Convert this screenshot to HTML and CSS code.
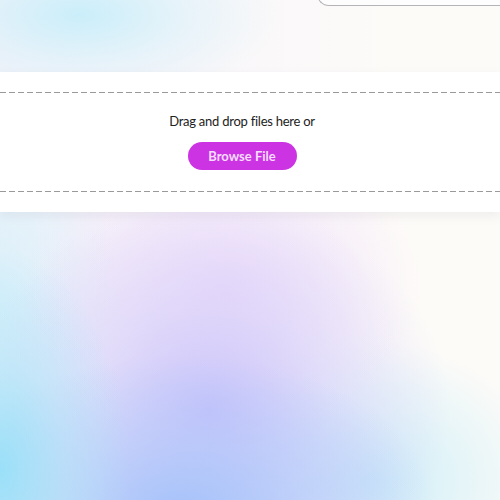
FILE: index.html
```html
<!DOCTYPE html>
<html lang="en">
<head>
<meta charset="utf-8">
<title>Upload</title>
<link rel="stylesheet" href="styles.css">
</head>
<body>
<header class="header">
  <div class="search"></div>
</header>
<section class="card">
  <div class="dropzone">
    <p class="hint">Drag and drop files here or</p>
    <button class="browse">Browse File</button>
  </div>
</section>
</body>
</html>
```
FILE: styles.css
```css
html, body {
  margin: 0;
  height: 100%;
}
body {
  font-family: "Lato", "Inter", sans-serif;
  background-color: #fdfbf8;
  background-image:
    radial-gradient(ellipse 130px 220px at 0px 470px, rgba(150, 224, 248, 0.95), rgba(170, 228, 248, 0.5) 50%, rgba(170, 228, 248, 0)),
    radial-gradient(ellipse 260px 160px at 180px 515px, rgba(160, 192, 250, 0.95), rgba(170, 196, 250, 0.5) 50%, rgba(170, 196, 250, 0)),
    radial-gradient(ellipse 240px 210px at 210px 410px, rgba(198, 192, 250, 0.95), rgba(208, 202, 250, 0.5) 50%, rgba(208, 202, 250, 0)),
    radial-gradient(ellipse 200px 150px at 225px 285px, rgba(238, 220, 250, 0.9), rgba(238, 220, 250, 0.4) 55%, rgba(238, 220, 250, 0)),
    radial-gradient(ellipse 180px 140px at 370px 480px, rgba(196, 236, 248, 0.85), rgba(196, 236, 248, 0)),
    radial-gradient(ellipse 120px 200px at 0px 300px, rgba(214, 240, 250, 0.9), rgba(214, 240, 250, 0)),
    radial-gradient(ellipse 200px 90px at 80px 15px, rgba(200, 238, 250, 0.95), rgba(212, 240, 250, 0.5) 50%, rgba(212, 240, 250, 0)),
    linear-gradient(90deg, rgba(238, 236, 250, 0.6), rgba(245, 242, 252, 0.3) 55%, rgba(253, 251, 248, 0) 80%);
  background-repeat: no-repeat;
}
.header {
  height: 72px;
  display: flex;
  justify-content: flex-end;
}
.search {
  width: 182px;
  height: 34px;
  margin-top: -30px;
  border: 1px solid #b4b4b8;
  border-right: none;
  border-radius: 0 0 0 12px;
  background: #fdfdfd;
}
.card {
  background: #fff;
  padding: 20px 0 20px;
  box-shadow: 0 4px 10px rgba(120, 120, 140, 0.10);
}
.dropzone {
  display: flex;
  flex-direction: column;
  align-items: center;
  padding: 21px 16px 22px 0;
  background-image:
    repeating-linear-gradient(90deg, #9a9a9a 0 6px, transparent 6px 9px),
    repeating-linear-gradient(90deg, #9a9a9a 0 6px, transparent 6px 9px);
  background-size: 100% 1px, 100% 1px;
  background-position: 0 0, 0 100%;
  background-repeat: no-repeat;
}
.hint {
  margin: 0;
  font-size: 13px;
  line-height: 16px;
  letter-spacing: -0.25px;
  color: #222;
}
.browse {
  margin-top: 13px;
  height: 28px;
  width: 109px;
  border: none;
  border-radius: 14px;
  background: #cc34e3;
  color: #f6dcff;
  font-family: inherit;
  font-size: 13px;
  font-weight: 700;
  padding: 0;
}
```
